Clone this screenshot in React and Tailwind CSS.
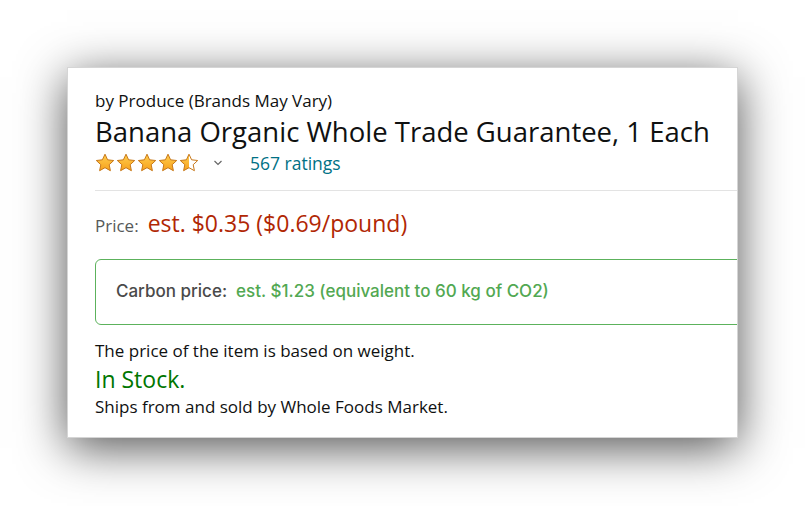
import React from "react";

function Star({ fill = 1, id }) {
  const d = "M10 1.2l2.6 5.6 6.1.7-4.5 4.2 1.2 6-5.4-3-5.4 3 1.2-6L1.3 7.5l6.1-.7z";
  return (
    <svg width="20" height="20" viewBox="0 0 20 20">
      <defs>
        <linearGradient id={`g${id}`} x1="0" y1="0" x2="0" y2="1">
          <stop offset="0" stopColor="#FFCE4F" />
          <stop offset="1" stopColor="#F7A11C" />
        </linearGradient>
        <clipPath id={`c${id}`}>
          <rect x="0" y="0" width={20 * fill} height="20" />
        </clipPath>
      </defs>
      <path d={d} fill="#fff" />
      <path d={d} fill={`url(#g${id})`} clipPath={`url(#c${id})`} />
      <path d={d} fill="none" stroke="#C7781A" strokeWidth="1" strokeLinejoin="round" />
    </svg>
  );
}

export default function App() {
  return (
    <div className="w-[806px] h-[506px] bg-white pl-[67px] pt-[67px]" style={{ fontFamily: "'Open Sans', 'Noto Sans', sans-serif" }}>
      <div className="w-[671px] h-[371px] bg-white border border-[#d5d5d5] overflow-hidden shadow-[0_10px_45px_rgba(0,0,0,0.68)] pl-[27px] pt-[21px]">
        <div className="text-[17px] leading-[24px] text-[#0f1111]">by Produce (Brands May Vary)</div>
        <div className="text-[27.5px] leading-[36px] text-[#0f1111] mt-[1px]">Banana Organic Whole Trade Guarantee, 1 Each</div>
        <div className="flex items-center h-[26px]">
          <div className="flex gap-[1px]">
            <Star id="a" />
            <Star id="b" />
            <Star id="c" />
            <Star id="d" />
            <Star id="e" fill={0.5} />
          </div>
          <svg className="ml-[14px]" width="10" height="8" viewBox="0 0 10 8">
            <path d="M1.5 2l3.5 3.5L8.5 2" fill="none" stroke="#666" strokeWidth="1.2" />
          </svg>
          <span className="ml-[27px] text-[17.5px] text-[#007185]">567 ratings</span>
        </div>
        <div className="mt-[14px] h-px bg-[#e3e3e3]" />
        <div className="flex items-baseline mt-[15px] h-[30px]">
          <span className="text-[17px] text-[#565959]">Price:</span>
          <span className="ml-[9px] text-[23px] text-[#B12704]">est. $0.35 ($0.69/pound)</span>
        </div>
        <div className="mt-[23px] w-[700px] h-[66px] border border-[#5cb25c] rounded-[6px] flex items-center pl-[20px]" style={{ fontFamily: "Inter, sans-serif" }}>
          <span className="text-[17px] font-medium text-[#4a4a4a]">Carbon price:</span>
          <span className="ml-[9px] text-[17px] font-medium text-[#52a852]">est. $1.23 (equivalent to 60 kg of CO2)</span>
        </div>
        <div className="mt-[14px] text-[17px] leading-[24px] text-[#0f1111]">The price of the item is based on weight.</div>
        <div className="text-[23px] leading-[32px] text-[#007600]">In Stock.</div>
        <div className="text-[17px] leading-[24px] text-[#0f1111]">Ships from and sold by Whole Foods Market.</div>
      </div>
    </div>
  );
}
